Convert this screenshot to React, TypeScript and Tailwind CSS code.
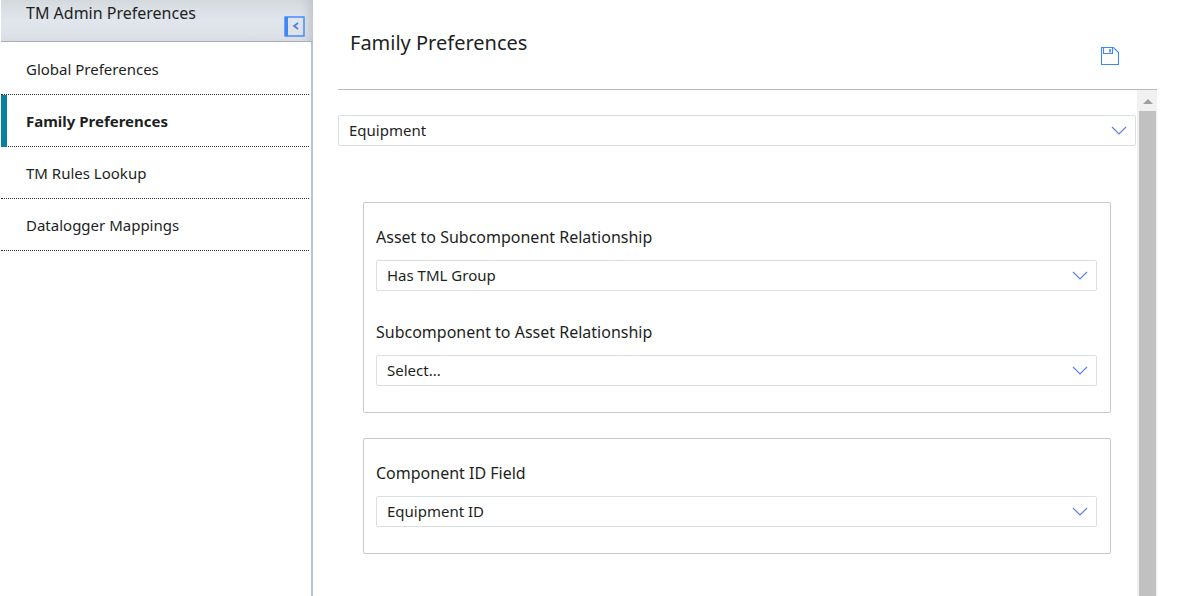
import { useState } from "react";

const NAV_ITEMS = ["Global Preferences", "Family Preferences", "TM Rules Lookup", "Datalogger Mappings"];

function SelectBox({ id, label, options }: { id: string; label?: string; options: string[] }) {
  const [value, setValue] = useState(options[0]);

  return (
    <div className="grid">
      <select
        id={id}
        aria-label={label}
        value={value}
        onChange={e => setValue(e.target.value)}
        className="col-start-1 row-start-1 h-[31px] w-full appearance-none rounded-xs border border-[#d8dfe5] bg-white pb-0.5 pl-[10px] pr-8 text-[15px] leading-5 text-[#1d1f23] focus:outline-none focus:border-[#3f87f5]"
      >
        {options.map(o => <option key={o}>{o}</option>)}
      </select>
      <svg viewBox="0 0 16 9" className="pointer-events-none col-start-1 row-start-1 mr-[9px] h-[9px] w-4 self-center justify-self-end" fill="none" stroke="#5b7fe8" strokeWidth="1.2">
        <path d="M1 1l7 7 7-7" />
      </svg>
    </div>
  );
}

function Field({ id, label, options }: { id: string; label: string; options: string[] }) {
  return (
    <div className="flex flex-col gap-[11px]">
      <label htmlFor={id} className="text-base leading-6">{label}</label>
      <SelectBox id={id} options={options} />
    </div>
  );
}

function Card({ children }: { children: React.ReactNode }) {
  return (
    <section className="flex flex-col gap-[29px] rounded-xs border border-[#c8c9cb] pt-[22px] pr-[13px] pb-[26px] pl-3">
      {children}
    </section>
  );
}

export default function App() {
  const [active, setActive] = useState("Family Preferences");

  return (
    <div className="flex h-screen overflow-hidden bg-white pl-px font-['Noto_Sans',sans-serif] text-[#1d1f23]">
      <aside className="flex w-[312px] shrink-0 flex-col border-r-2 border-[#bcc4ce]">
        <header className="-mr-0.5 flex h-[42px] items-start justify-between border-b border-[#a9adb5] bg-[#e0e5ec] bg-linear-to-b from-[#d6dbdf] via-[#e1e6ee] to-[#dce1e6] pr-2 pl-[25px] shadow-[inset_-10px_0_12px_-6px_#bcc2c8]">
          <h2 className="pt-[3px] text-base leading-5">TM Admin Preferences</h2>
          <button type="button" aria-label="Collapse" className="mt-4">
            <svg viewBox="0 0 21 21" className="h-[21px] w-[21px]" fill="none">
              <rect x="1" y="1" width="19" height="19" stroke="#3f87f5" strokeWidth="1.4" />
              <rect x="1" y="1" width="3" height="19" fill="#3f87f5" />
              <path d="M14 7l-4 3 4 3" stroke="#4b7be0" strokeWidth="1.6" />
            </svg>
          </button>
        </header>
        <nav className="flex flex-col pt-px pr-0.5">
          {NAV_ITEMS.map(item => (
            <a
              key={item}
              href="#"
              onClick={e => { e.preventDefault(); setActive(item); }}
              className={`flex h-[52px] border-b border-dotted border-[#333] text-[15px] leading-5 ${item === active ? "font-bold" : ""}`}
            >
              <span className={`-mb-px w-1.5 ${item === active ? "bg-[#09819c]" : ""}`} />
              <span className="flex flex-1 items-center pl-[19px]">{item}</span>
            </a>
          ))}
        </nav>
      </aside>

      <main className="mr-6 ml-[25px] flex min-w-0 flex-1 flex-col">
        <header className="flex h-[90px] shrink-0 items-start justify-between border-b border-[#b9babe] pr-[37px] pl-3">
          <h1 className="pt-[29px] text-xl leading-7">Family Preferences</h1>
          <button type="button" aria-label="Save" className="mt-[46px]">
            <svg viewBox="0 0 20 20" className="h-5 w-5" fill="none" stroke="#3f87f5" strokeWidth="1.1">
              <path d="M1.5 1.5h12l5 5v12h-17z" />
              <path d="M3.5 1.5v6h9v-6" />
              <path d="M10 3v3.5" strokeWidth="1.6" />
            </svg>
          </button>
        </header>

        <div className="flex min-h-0 flex-1">
          <div className="min-w-0 flex-1 overflow-hidden pt-[25px] pr-px">
            <SelectBox id="family" label="Family" options={["Equipment"]} />
            <div className="mt-14 mr-[25px] ml-[25px] flex flex-col gap-[25px]">
              <Card>
                <Field id="asset-sub" label="Asset to Subcomponent Relationship" options={["Has TML Group"]} />
                <Field id="sub-asset" label="Subcomponent to Asset Relationship" options={["Select...", "Has TML Group"]} />
              </Card>
              <Card>
                <Field id="component-id" label="Component ID Field" options={["Equipment ID"]} />
              </Card>
            </div>
          </div>
          <div aria-hidden="true" className="flex w-5 shrink-0 flex-col bg-[#f1f1f1] pr-px pl-0.5">
            <div className="flex h-[21px] items-center justify-center pt-0.5">
              <svg viewBox="0 0 10 5" className="h-[5px] w-[10px]" fill="#a0a0a0"><path d="M5 0l5 5H0z" /></svg>
            </div>
            <div className="flex-1 bg-[#c1c1c1]" />
          </div>
        </div>
      </main>
    </div>
  );
}
